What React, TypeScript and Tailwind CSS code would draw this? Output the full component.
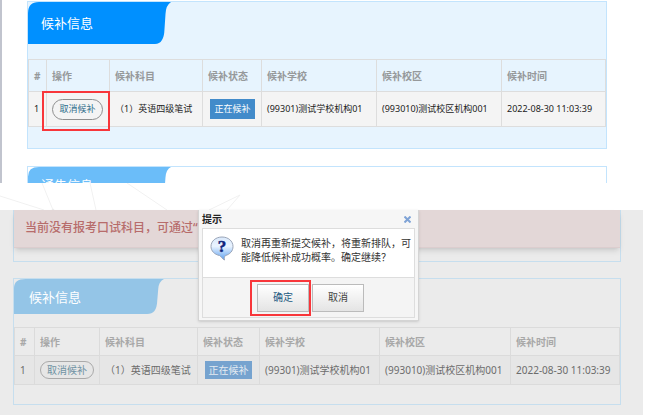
import React from "react";
import clsx from "clsx";

interface Waitlist {
  id: number;
  subject: string;
  status: string;
  school: string;
  campus: string;
  time: string;
}

const ROWS: Waitlist[] = [
  {
    id: 1,
    subject: "（1）英语四级笔试",
    status: "正在候补",
    school: "(99301)测试学校机构01",
    campus: "(993010)测试校区机构001",
    time: "2022-08-30 11:03:39",
  },
];

const HEADERS = ["#", "操作", "候补科目", "候补状态", "候补学校", "候补校区", "候补时间"];

// column widths, the last column takes the rest
const COLS = ["w-[18px]", "w-[63px]", "w-[93px]", "w-[59px]", "w-[115px]", "w-[125px]", ""];
const COLS_DIM = ["w-[20px]", "w-[65px]", "w-[98px]", "w-[62px]", "w-[120px]", "w-[131px]", ""];

const PanelTab: React.FC<{ title: string; className: string }> = ({ title, className }) => (
  <div className={clsx("relative flex items-center", className)}>
    <svg
      viewBox="0 0 143 42"
      preserveAspectRatio="none"
      className="absolute inset-0 h-full w-full"
      fill="currentColor"
      aria-hidden="true"
    >
      <path d="M0 42V11Q0 0 11 0H143Q138 3 137.5 12L136.5 27Q136 42 127 42Z" />
    </svg>
    <h2 className="relative text-[13px] leading-5 text-white">{title}</h2>
  </div>
);

const WaitTable: React.FC<{ dim?: boolean }> = ({ dim }) => {
  const cell = clsx("border px-[5px] whitespace-nowrap", dim ? "border-[#dbdbdb]" : "border-[#dddddd]");
  return (
    <table className="w-full table-fixed border-collapse text-left">
      <colgroup>
        {(dim ? COLS_DIM : COLS).map((w, i) => (
          <col key={i} className={w} />
        ))}
      </colgroup>
      <thead>
        <tr className={dim ? "h-7 text-[#a8a8a8]" : "h-8 text-[#96999b]"}>
          {HEADERS.map((h) => (
            <th key={h} className={clsx(cell, "text-[10px] leading-4 font-bold")}>
              {h}
            </th>
          ))}
        </tr>
      </thead>
      <tbody>
        {ROWS.map((r) => (
          <tr
            key={r.id}
            className={
              dim
                ? "h-[29px] bg-[#e6e6e6] text-[10px] leading-4 text-[#6c6c6c]"
                : "h-[35px] bg-[#f4f4f4] text-[9px] leading-4 text-[#222222]"
            }
          >
            <td className={cell}>{r.id}</td>
            <td className={cell}>
              <div className="relative flex">
                <button
                  type="button"
                  className={clsx(
                    "rounded-full border",
                    dim
                      ? "h-[18px] w-[54px] border-[#aaaaaa] text-[#6f92a3]"
                      : "h-[21px] w-[51px] border-[#8f8f8f] text-[#2f6f8c]"
                  )}
                >
                  取消候补
                </button>
                {!dim && (
                  <span className="absolute -top-2 -right-[6px] -bottom-[11px] -left-[10px] border-2 border-[#f8363a]" />
                )}
              </div>
            </td>
            <td className={cell}>{r.subject}</td>
            <td className={cell}>
              <span
                className={clsx(
                  "ml-[2px] flex items-center justify-center",
                  dim ? "h-[18px] w-[47px] bg-[#76a3cf] text-[#e4ebf1]" : "h-5 w-[45px] bg-[#428bca] text-white"
                )}
              >
                {r.status}
              </span>
            </td>
            <td className={cell}>{r.school}</td>
            <td className={cell}>{r.campus}</td>
            <td className={cell}>{r.time}</td>
          </tr>
        ))}
      </tbody>
    </table>
  );
};

const QuestionIcon = () => (
  <svg width="24" height="25" viewBox="0 0 24 25" className="shrink-0" aria-hidden="true">
    <defs>
      <linearGradient id="bubble" x1="0" y1="0" x2="0" y2="1">
        <stop offset="0" stopColor="#d9e8fb" />
        <stop offset="0.4" stopColor="#eaf4ff" />
        <stop offset="1" stopColor="#5c9ff0" />
      </linearGradient>
    </defs>
    <path
      d="M12 1C5.800 1 1 5 1 10.500C1 15 4.500 18.500 9.500 19.500C11 20.500 12 22.500 14.500 24C14 22 14.500 20.500 15.500 19.500C20 18.300 23 15 23 10.500C23 5 18.200 1 12 1Z"
      fill="url(#bubble)"
      stroke="#9aa5b8"
    />
    <text
      x="12"
      y="16"
      textAnchor="middle"
      fill="#10247c"
      stroke="#10247c"
      strokeWidth="0.5"
      className="font-['Liberation_Serif',serif] text-[17px] font-bold"
    >
      ?
    </text>
  </svg>
);

const ConfirmDialog = () => (
  <div
    role="dialog"
    aria-labelledby="confirm-title"
    className="absolute top-0 left-[198px] w-[221px] border-x border-b border-[#d4d4d4] bg-[#f6f6f6] px-[3px] pb-[2px] shadow-sm"
  >
    <div className="flex h-[18px] items-center justify-between">
      <h3 id="confirm-title" className="text-[10px] leading-4 font-bold text-[#222222]">
        提示
      </h3>
      <button type="button" aria-label="关闭" className="flex h-4 w-4 items-center justify-center text-[#7fa3d6]">
        <svg width="7" height="7" viewBox="0 0 7 7" stroke="currentColor" strokeWidth="2" aria-hidden="true">
          <path d="M0.500 0.500L6.500 6.500M6.500 0.500L0.500 6.500" />
        </svg>
      </button>
    </div>
    <div className="flex h-[50px] gap-[7px] border border-[#dddddd] bg-white pt-[7px] pl-[7px]">
      <QuestionIcon />
      <p className="flex-1 text-[10px] leading-[14px] text-[#333333]">
        取消再重新提交候补，将重新排队，可能降低候补成功概率。确定继续？
      </p>
    </div>
    <div className="flex h-[40px] items-center justify-center gap-[3px] border-x border-b border-[#dddddd] bg-[#f4f4f4] pl-1">
      <div className="relative flex">
        <button
          type="button"
          className="h-7 w-[52px] border border-[#bbbbbb] bg-linear-to-b from-white to-[#e4e4e4] text-[10px] text-[#245b82]"
        >
          确定
        </button>
        <span className="absolute -inset-y-1 -right-[2px] -left-[7px] border-2 border-[#f8363a]" />
      </div>
      <button
        type="button"
        className="h-7 w-[52px] border border-[#bbbbbb] bg-linear-to-b from-white to-[#e4e4e4] text-[10px] text-[#444444]"
      >
        取消
      </button>
    </div>
  </div>
);

const App: React.FC = () => {
  return (
    <main className="bg-white font-['Noto_Sans','Noto_Sans_CJK_SC',sans-serif]">
      {/* 候补列表 */}
      <section className="border-l-2 border-[#c1c4ce] pt-px pr-[39px] pl-[25px]">
        <div className="border border-[#c3e4fd] bg-[#e7f4fe] pb-[21px]">
          <PanelTab title="候补信息" className="mb-[15px] h-[42px] w-[143px] pl-[13px] text-[#0090ff]" />
          <WaitTable />
        </div>
        <div className="mt-[17px] h-[17px] overflow-hidden border border-b-0 border-[#c3e4fd]">
          <PanelTab title="通告信息" className="h-[36px] w-[143px] pl-[13px] text-[#6bbdf9]" />
        </div>
      </section>

      <svg width="646" height="27" viewBox="0 0 646 27" stroke="#f1f1f1" fill="none" className="block" aria-hidden="true">
        <path d="M0 13L44 27M42 0L53 27M90 0L96 27M127 0L167 27M240 12L209 27M240 12L227 27" />
        <circle cx="53" cy="27" r="1" fill="#dddddd" />
      </svg>

      {/* 取消候补确认 */}
      <section className="relative mr-[3px] bg-[#ebebeb] pr-[22px] pb-[10px] pl-[13px]">
        <div className="border-x border-b border-[#c6deee] pb-[13px]">
          <p className="h-[38px] overflow-hidden border-b border-[#dccdce] bg-[#e3d7d7] pt-2 pl-[11px] text-[12px] leading-5 font-medium whitespace-nowrap text-[#b76c6b] shadow-md">
            当前没有报考口试科目，可通过“
          </p>
        </div>
        <div className="mt-[16px] border border-[#c6deee] pb-[19px]">
          <PanelTab title="候补信息" className="mb-[13px] h-[35px] w-[150px] pl-[15px] text-[#94c5e7]" />
          <WaitTable dim />
        </div>
        <ConfirmDialog />
      </section>
    </main>
  );
};

export default App;
